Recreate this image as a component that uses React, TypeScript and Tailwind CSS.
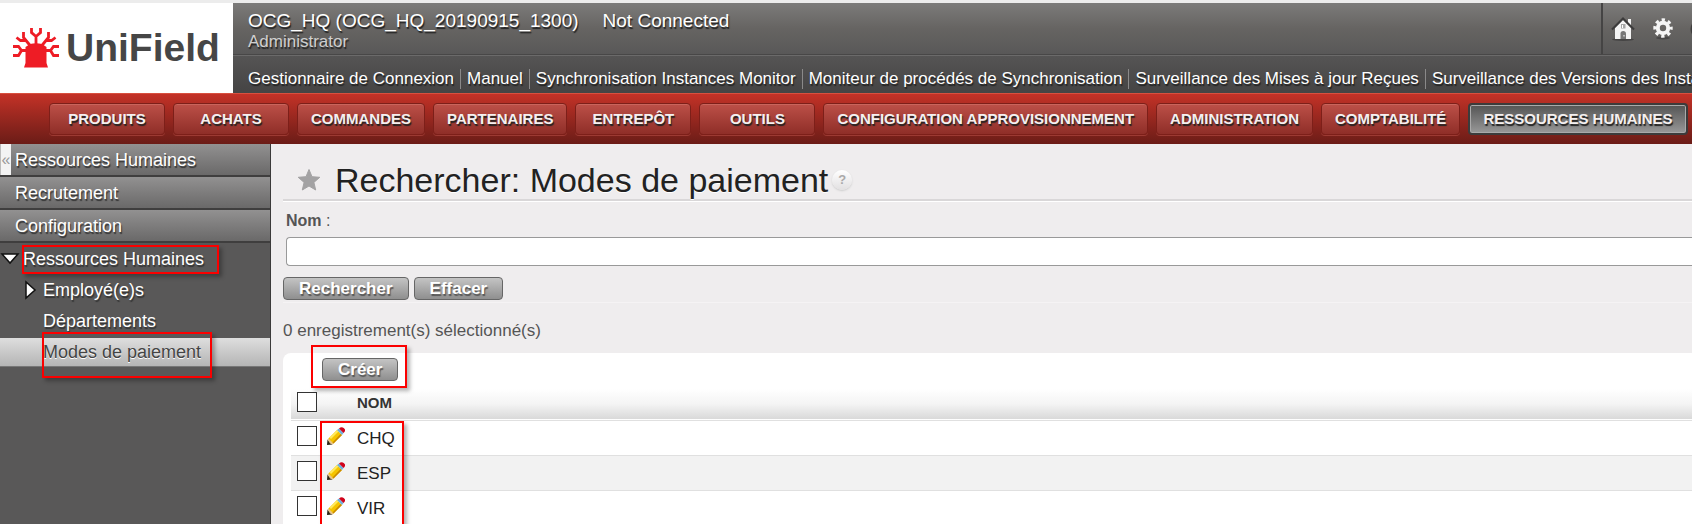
import type { ReactNode } from 'react';

const shortcuts = [
    'Gestionnaire de Connexion',
    'Manuel',
    'Synchronisation Instances Monitor',
    'Moniteur de procédés de Synchronisation',
    'Surveillance des Mises à jour Reçues',
    'Surveillance des Versions des Instances'
];

const modules = [
    'PRODUITS',
    'ACHATS',
    'COMMANDES',
    'PARTENAIRES',
    'ENTREPÔT',
    'OUTILS',
    'CONFIGURATION APPROVISIONNEMENT',
    'ADMINISTRATION',
    'COMPTABILITÉ',
    'RESSOURCES HUMAINES'
];

const activeModule = 'RESSOURCES HUMAINES';

const sections = ['Ressources Humaines', 'Recrutement', 'Configuration'];

const records = ['CHQ', 'ESP', 'VIR'];

function Logo() {
    return (
        <a href="#" className="flex w-[233px] shrink-0 items-center gap-[7px] bg-white pl-[13px] text-[#464646]">
            <svg width="46" height="40" viewBox="0 0 46 40" className="shrink-0" aria-hidden="true">
                <path d="M12.500 19L17 16Q23 14.500 29 16L33.500 19V35L35 39.500H11L12.500 35Z" fill="#ee1c25" />
                <g fill="none" stroke="#ee1c25" strokeWidth="2.800">
                    <path d="M23 18V8M18.500 0V4.500L23 8.500L27.500 4.500V0" />
                    <path d="M17.500 18L13 12.500L10.500 9.500V4M3.500 9.500L7.500 12.500H13" />
                    <path d="M28.500 18L33 12.500L35.500 9.500V4M42.500 9.500L38.500 12.500H33" />
                    <path d="M15 22.500H8.500L5.500 18.500H0M8.500 22.500L5.500 27.500H0" />
                    <path d="M31 22.500H37.500L40.500 18.500H46M37.500 22.500L40.500 27.500H46" />
                </g>
            </svg>
            <span className="text-[39px] leading-10 font-bold">UniField</span>
        </a>
    );
}

function HouseIcon() {
    return (
        <svg width="24" height="24" viewBox="0 0 24 24" aria-hidden="true">
            <ellipse cx="12" cy="22.500" rx="11" ry="1.500" fill="#454444" />
            <path d="M4 11L12 3L20 11V22H4Z" fill="#f4f4f4" />
            <path d="M17 2H20V9L17 6Z" fill="#f4f4f4" />
            <path d="M1 12.500L12 1.500L23 12.500" fill="none" stroke="#3c3b3b" strokeWidth="2" />
            <path d="M9.500 22V16.500Q9.500 14 12.200 14T15 16.500V22Z" fill="#777" />
            <path d="M10 7H14.500V11.500H10Z" fill="#a5a5a5" />
            <path d="M11.500 8V11M13 18V19.500" stroke="#fff" />
        </svg>
    );
}

function GearIcon() {
    return (
        <svg width="20" height="22" viewBox="0 0 20 22" aria-hidden="true">
            <ellipse cx="10" cy="20" rx="7" ry="1.500" fill="#484747" />
            <circle cx="10" cy="10" r="5.200" fill="none" stroke="#f5f5f5" strokeWidth="4" />
            <circle cx="10" cy="10" r="8.200" fill="none" stroke="#f5f5f5" strokeWidth="3" strokeDasharray="3.300 3.140" strokeDashoffset="1.600" />
        </svg>
    );
}

function ExitIcon() {
    return (
        <svg width="20" height="20" viewBox="0 0 20 20" className="shrink-0" aria-hidden="true">
            <circle cx="10" cy="10" r="9.500" fill="#3f3e3e" />
            <path d="M6 6L14 14M14 6L6 14" stroke="#eee" strokeWidth="2" />
        </svg>
    );
}

function StarIcon() {
    return (
        <svg width="24" height="24" viewBox="0 0 24 24" aria-hidden="true">
            <path
                d="M12 1.500L15 8.700L22.800 9.300L16.900 14.400L18.700 22L12 18L5.300 22L7.100 14.400L1.200 9.300L9 8.700Z"
                fill="#a3a2a3"
                stroke="#a3a2a3"
                strokeLinejoin="round"
            />
        </svg>
    );
}

function PencilIcon() {
    return (
        <svg width="18" height="18" viewBox="0 0 18 18" aria-hidden="true">
            <path d="M0 18L.5 12.500L5.500 17.500Z" fill="#2b2313" />
            <path d="M.5 12.500L2.500 10.500L7.500 15.500L5.500 17.500L3 16.500Z" fill="#e8c489" />
            <path d="M1.500 11.500L10 3L15 8L6.500 16.500L4 14Z" fill="#f5c400" />
            <path d="M2.500 10.500L10 3L11.500 4.500L4 12Z" fill="#ffe95c" />
            <path d="M5.500 15.500L13.500 7L15 8L6.500 16.500Z" fill="#c98a00" />
            <path d="M10 3L12 1.500L16.500 6L15 8Z" fill="#6fb0dc" />
            <path d="M12 1.500Q14.500-1 17 1.200T16.500 6Z" fill="#d0021b" />
        </svg>
    );
}

// Red frame laid over the element it points at
function Highlight({ className }: { className: string }) {
    return (
        <span
            className={`pointer-events-none absolute z-10 border-2 border-[#fb0000] shadow-[3px_3px_4px_rgba(0,0,0,0.3)] ${className}`}
        />
    );
}

function Button({ children }: { children: ReactNode }) {
    return (
        <button
            type="button"
            className="h-[23px] rounded border border-[#666] bg-linear-to-b from-[#c4c4c4] to-[#8f8f8f] px-[15px] text-[17px] leading-5 font-bold text-white [text-shadow:1px_2px_1px_#555]"
        >
            {children}
        </button>
    );
}

function Header() {
    return (
        <header className="flex h-[90px]">
            <Logo />
            <div className="flex min-w-0 flex-1 flex-col text-white [text-shadow:1px_2px_1px_#222]">
                <div className="flex h-[52px] border-b border-[#484747] bg-linear-to-b from-[#7c7b7a] via-[#666462] to-[#595858]">
                    <div className="flex-1 pt-[7px] pl-[15px]">
                        <div className="flex gap-6 text-[19px] leading-[22px]">
                            <span>OCG_HQ (OCG_HQ_20190915_1300)</span>
                            <span>Not Connected</span>
                        </div>
                        <div className="text-[17px] leading-5 text-[#cfcfcf]">Administrator</div>
                    </div>
                    <div className="flex w-[91px] items-center overflow-hidden border-l-2 border-[#454444] pl-2">
                        <a href="#" aria-label="Accueil" className="mr-[18px]"><HouseIcon /></a>
                        <a href="#" aria-label="Préférences" className="mr-[17px]"><GearIcon /></a>
                        <a href="#" aria-label="Déconnexion"><ExitIcon /></a>
                    </div>
                </div>
                <ul className="flex flex-1 items-center overflow-hidden border-t border-[#6b6a6a] bg-linear-to-b from-[#555454] to-[#454444] pt-2 pl-[9px] text-[17px] leading-5 whitespace-nowrap">
                    {shortcuts.map((name) => (
                        <li key={name} className="border-r border-[#8a8989] px-[6px]">
                            <a href="#">{name}</a>
                        </li>
                    ))}
                </ul>
            </div>
        </header>
    );
}

function ModuleBar() {
    return (
        <nav className="flex h-[51px] items-center gap-2 overflow-hidden border-t border-[#d8503f] bg-linear-to-b from-[#c43227] to-[#6b1c17] pl-[49px]">
            {modules.map((name) => (
                <a
                    key={name}
                    href="#"
                    className={`flex h-8 min-w-[116px] shrink-0 items-center justify-center rounded px-[13px] text-[15px] font-bold whitespace-nowrap text-[#f4f0f0] [text-shadow:1px_2px_1px_#222] ${name === activeModule
                            ? 'border-2 border-[#3c3b3b] bg-linear-to-b from-[#555] to-[#999] shadow-[inset_0_0_0_1px_#aaa]'
                            : 'border border-[#7d1f19] bg-linear-to-b from-[#bd5048] to-[#8f2e28] shadow-[inset_0_1px_0_#c9655c,0_1px_0_#9c3a33]'
                        }`}
                >
                    {name}
                </a>
            ))}
        </nav>
    );
}

function Sidebar() {
    return (
        <aside className="relative w-[271px] shrink-0 border-r border-[#3b3a3a] bg-[#595858] text-[18px] text-white [text-shadow:1px_2px_1px_#333]">
            <button
                type="button"
                aria-label="Réduire le menu"
                className="absolute top-0 left-0 h-[31px] w-[11px] border-l border-[#bbb] bg-[#f3f3f3] text-base leading-7 text-[#999] [text-shadow:none]"
            >
                «
            </button>
            {sections.map((name) => (
                <a
                    key={name}
                    href="#"
                    className="flex h-[33px] items-center border-b-2 border-[#3f3e3e] bg-linear-to-b from-[#929191] to-[#6a6969] pt-[2px] pl-[15px]"
                >
                    {name}
                </a>
            ))}
            <ul className="flex flex-col gap-[3px] pt-[2px]">
                <li className="relative flex h-7 items-center pl-[23px]">
                    <svg width="20" height="12" viewBox="0 0 20 12" className="absolute top-2 left-0" aria-hidden="true">
                        <path d="M2 1H18L10 10Z" fill="#fff" stroke="#111" strokeWidth="1.500" />
                    </svg>
                    <a href="#">Ressources Humaines</a>
                    <Highlight className="top-0 left-[22px] h-[29px] w-[197px]" />
                </li>
                <li className="relative flex h-7 items-center pl-[43px]">
                    <svg width="12" height="20" viewBox="0 0 12 20" className="absolute top-1 left-[25px]" aria-hidden="true">
                        <path d="M1 2V18L10 10Z" fill="#fff" stroke="#111" strokeWidth="1.500" />
                    </svg>
                    <a href="#">Employé(e)s</a>
                </li>
                <li className="flex h-7 items-center pl-[43px]">
                    <a href="#">Départements</a>
                </li>
                <li className="relative flex h-7 items-center bg-linear-to-b from-[#dedede] to-[#b5b5b5] pl-[43px] text-[#444] shadow-[0_1px_0_#777] [text-shadow:0_1px_0_#fff]">
                    <a href="#">Modes de paiement</a>
                    <Highlight className="-top-[6px] left-[42px] h-[46px] w-[170px]" />
                </li>
            </ul>
        </aside>
    );
}

function Checkbox({ label }: { label: string }) {
    return (
        <input
            type="checkbox"
            aria-label={label}
            className="block size-5 appearance-none border border-[#333] bg-white"
        />
    );
}

function RecordTable() {
    return (
        <div className="relative pl-2">
            <table className="w-full border-collapse text-left text-[17px] leading-5 text-[#222]">
                <thead>
                    <tr className="h-[31px] border-b border-[#e0e0e0] bg-linear-to-b from-white via-[#f4f4f4] to-[#d9d9d9]">
                        <th className="w-[36px] pt-[3px] pl-[6px] align-top"><Checkbox label="Tout sélectionner" /></th>
                        <th className="w-[30px]" />
                        <th className="pt-1 align-top text-[15px] font-bold text-[#333]">NOM</th>
                    </tr>
                </thead>
                <tbody>
                    {records.map((name) => (
                        <tr key={name} className="h-[35px] border-b border-[#e0e0e0] even:bg-[#f2f2f2]">
                            <td className="pt-[5px] pl-[6px] align-top"><Checkbox label={name} /></td>
                            <td className="pt-[6px] align-top">
                                <button type="button" aria-label={`Modifier ${name}`} className="block"><PencilIcon /></button>
                            </td>
                            <td className="pt-2 align-top">{name}</td>
                        </tr>
                    ))}
                </tbody>
            </table>
            <Highlight className="top-8 left-[37px] h-[120px] w-[84px]" />
        </div>
    );
}

function Content() {
    return (
        <main className="min-w-0 flex-1 bg-[#efedee] pl-3 text-[17px] text-[#555]">
            <div className="flex h-[57px] items-center border-b-2 border-[#d9d7d8] pt-4 pl-[14px] shadow-[0_1px_0_#fff]">
                <StarIcon />
                <h1 className="mr-1 ml-[14px] text-[34px] leading-9 text-[#222] [text-shadow:0_1px_0_#fff]">
                    Rechercher: Modes de paiement
                </h1>
                <a
                    href="#"
                    aria-label="Aide"
                    className="flex size-5 items-center justify-center rounded-full bg-linear-to-b from-white to-[#e2e0e1] text-[13px] font-bold text-[#aaa] shadow-[0_1px_2px_#ccc]"
                >
                    ?
                </a>
            </div>
            <form className="border-b border-[#f5f3f4]">
                <div className="pt-[10px] pl-[3px]">
                    <label htmlFor="nom" className="block text-base leading-5"><b>Nom</b> :</label>
                    <input
                        id="nom"
                        type="text"
                        className="mt-[6px] block h-[29px] w-full rounded-l border border-r-0 border-[#999] bg-white px-2"
                    />
                </div>
                <div className="flex gap-[5px] pt-[11px] pb-[2px]">
                    <Button>Rechercher</Button>
                    <Button>Effacer</Button>
                </div>
            </form>
            <p className="pt-[18px] leading-5">0 enregistrement(s) sélectionné(s)</p>
            <section className="mt-3 rounded-tl-lg bg-white">
                <div className="relative flex h-9 items-start pt-[5px] pl-[39px]">
                    <Button>Créer</Button>
                    <Highlight className="-top-2 left-7 h-[43px] w-[96px]" />
                </div>
                <RecordTable />
            </section>
        </main>
    );
}

export default function App() {
    return (
        <div className="flex h-screen flex-col overflow-hidden border-t-3 border-[#ececec] font-['Liberation_Sans',Arial,sans-serif]">
            <Header />
            <ModuleBar />
            <div className="flex min-h-0 flex-1">
                <Sidebar />
                <Content />
            </div>
        </div>
    );
}
